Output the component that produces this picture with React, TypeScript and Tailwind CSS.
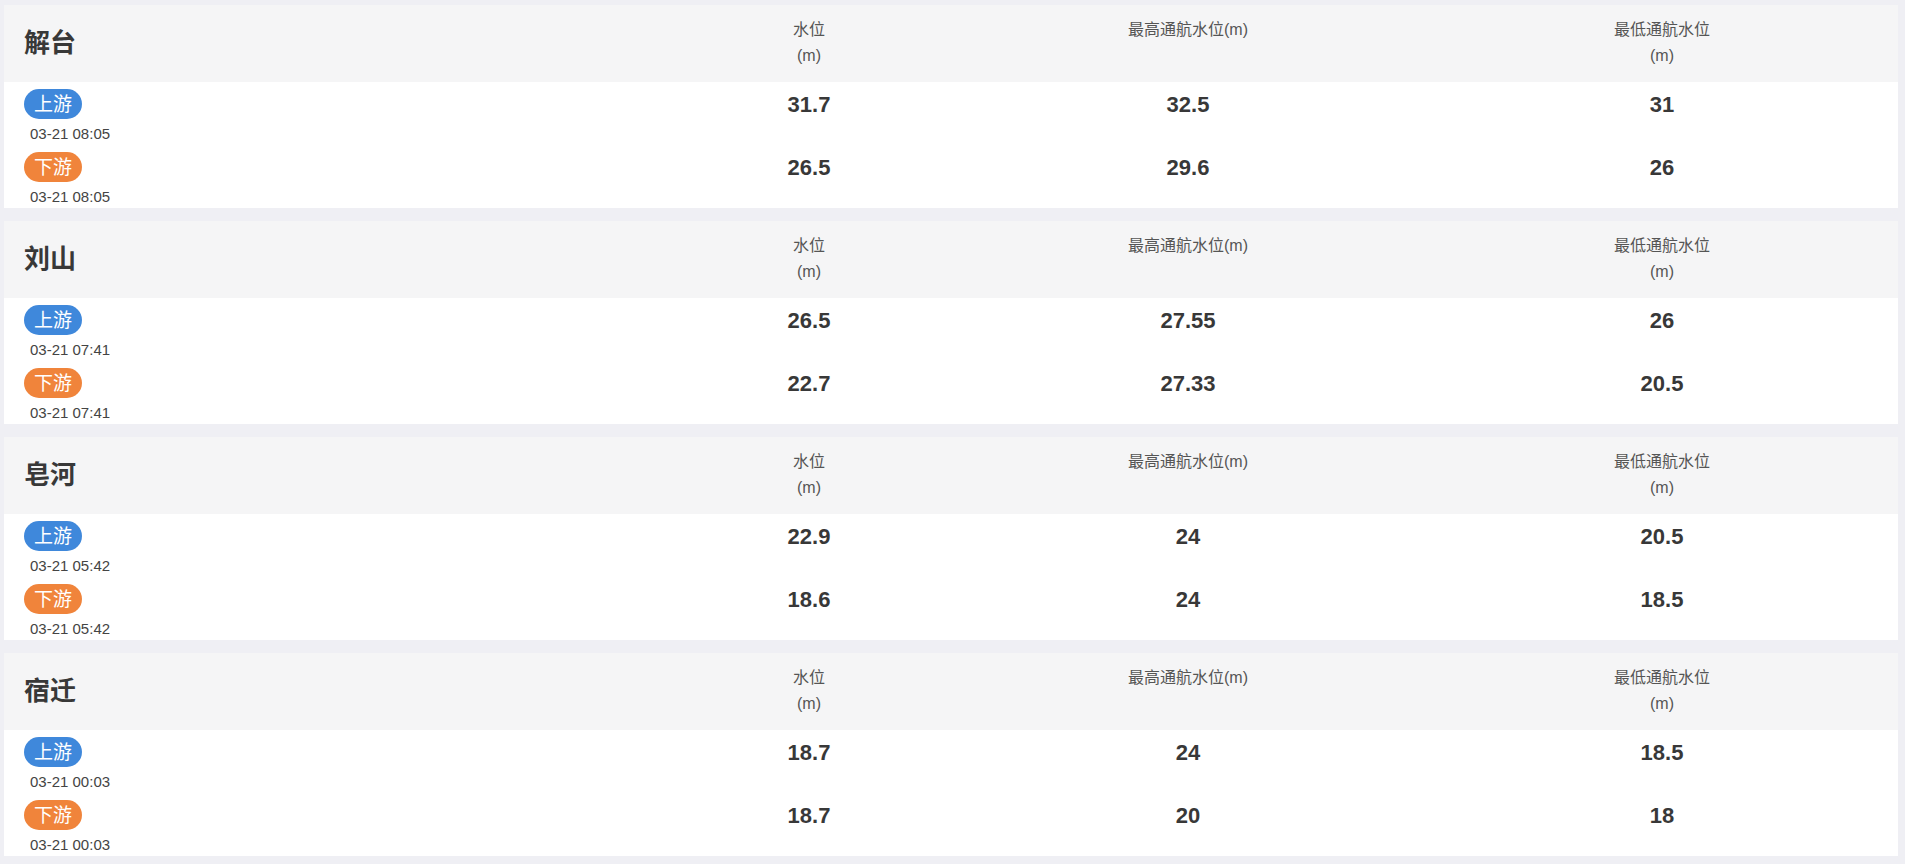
import React from "react";

type Row = { time: string; level: string; max: string; min: string };
type Station = { name: string; up: Row; down: Row };

const stations: Station[] = [
  {
    name: "解台",
    up: { time: "03-21 08:05", level: "31.7", max: "32.5", min: "31" },
    down: { time: "03-21 08:05", level: "26.5", max: "29.6", min: "26" },
  },
  {
    name: "刘山",
    up: { time: "03-21 07:41", level: "26.5", max: "27.55", min: "26" },
    down: { time: "03-21 07:41", level: "22.7", max: "27.33", min: "20.5" },
  },
  {
    name: "皂河",
    up: { time: "03-21 05:42", level: "22.9", max: "24", min: "20.5" },
    down: { time: "03-21 05:42", level: "18.6", max: "24", min: "18.5" },
  },
  {
    name: "宿迁",
    up: { time: "03-21 00:03", level: "18.7", max: "24", min: "18.5" },
    down: { time: "03-21 00:03", level: "18.7", max: "20", min: "18" },
  },
];

const font = { fontFamily: '"Liberation Sans", "Noto Sans CJK SC", sans-serif' };

function DataRow({ label, color, row }: { label: string; color: string; row: Row }) {
  return (
    <div className="grid grid-cols-[664px_282px_476px_1fr] h-[63px]">
      <div className="pl-5 pt-[7px]">
        <span
          className={`inline-flex h-[30px] items-center rounded-full px-[10px] text-[19px] leading-none text-white ${color}`}
        >
          {label}
        </span>
        <div className="mt-[5px] pl-[6px] text-[15px] leading-[20px] text-[#444]">{row.time}</div>
      </div>
      {[row.level, row.max, row.min].map((v, i) => (
        <div key={i} className="pt-[7px]">
          <div className="flex h-[30px] items-center justify-center text-[22px] font-bold text-[#383838]">
            {v}
          </div>
        </div>
      ))}
    </div>
  );
}

function Card({ s }: { s: Station }) {
  return (
    <div className="h-[203px] bg-white">
      <div className="grid h-[77px] grid-cols-[664px_282px_476px_1fr] bg-[#f5f5f6]">
        <div className="flex items-center pl-5 text-[26px] font-bold text-[#383838]">{s.name}</div>
        <div className="pt-[12px] text-center text-[16px] leading-[26px] text-[#555]">
          水位
          <br />
          (m)
        </div>
        <div className="pt-[12px] text-center text-[16px] leading-[26px] text-[#555]">最高通航水位(m)</div>
        <div className="pt-[12px] text-center text-[16px] leading-[26px] text-[#555]">
          最低通航水位
          <br />
          (m)
        </div>
      </div>
      <DataRow label="上游" color="bg-[#3f88db]" row={s.up} />
      <DataRow label="下游" color="bg-[#f0843b]" row={s.down} />
    </div>
  );
}

export default function App() {
  return (
    <div className="min-h-screen bg-[#efeff4] pl-[4px] pr-[7px] pt-[5px]" style={font}>
      <div className="flex flex-col gap-[13px]">
        {stations.map((s) => (
          <Card key={s.name} s={s} />
        ))}
      </div>
    </div>
  );
}
